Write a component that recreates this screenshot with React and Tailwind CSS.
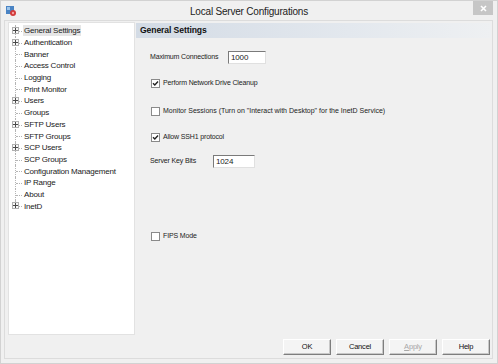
import React from "react";

const treeItems = [
  { label: "General Settings", plus: true, selected: true },
  { label: "Authentication", plus: true },
  { label: "Banner" },
  { label: "Access Control" },
  { label: "Logging" },
  { label: "Print Monitor" },
  { label: "Users", plus: true },
  { label: "Groups" },
  { label: "SFTP Users", plus: true },
  { label: "SFTP Groups" },
  { label: "SCP Users", plus: true },
  { label: "SCP Groups" },
  { label: "Configuration Management" },
  { label: "IP Range" },
  { label: "About" },
  { label: "InetD", plus: true, last: true },
];

function TreeRow({ item }) {
  return (
    <div className="relative flex items-center h-[11.7px]">
      <div
        className={
          "absolute left-[5px] w-px border-l border-dotted border-[#b4b4b4] " +
          (item.last ? "top-0 h-[6px]" : "top-0 h-full")
        }
      />
      <div className="absolute left-[6px] top-[6px] w-[6px] border-t border-dotted border-[#b4b4b4]" />
      {item.plus && (
        <div className="absolute left-[2px] top-[2px] w-[7px] h-[7px] border border-[#b0b0b0] bg-[#f8f8f8] flex items-center justify-center">
          <div className="relative w-[5px] h-[5px]">
            <div className="absolute left-0 top-[2px] w-[5px] h-px bg-[#4a4a4a]" />
            <div className="absolute left-[2px] top-0 w-px h-[5px] bg-[#4a4a4a]" />
          </div>
        </div>
      )}
      <div
        className={
          "ml-[13px] px-[1px] leading-[11px] " +
          (item.selected ? "bg-[#e6e6e6]" : "")
        }
      >
        {item.label}
      </div>
    </div>
  );
}

function Checkbox({ checked }) {
  return (
    <div className="w-[9px] h-[9px] border border-[#8a8a8a] bg-white flex items-center justify-center shrink-0">
      {checked && (
        <svg width="7" height="7" viewBox="0 0 7 7">
          <path d="M1 3.2 L2.8 5 L6 1.5" stroke="#222" strokeWidth="1.4" fill="none" />
        </svg>
      )}
    </div>
  );
}

function Btn({ children, disabled }) {
  return (
    <div
      className={
        "w-[48px] h-[16px] flex items-center justify-center bg-[#f4f4f4] border-t border-l border-t-white border-l-white border-r border-b border-r-[#7e7e7e] border-b-[#7e7e7e] shadow-[inset_-1px_-1px_0_#c8c8c8] " +
        (disabled ? "text-[#a8a8a8]" : "text-[#111]")
      }
    >
      {children}
    </div>
  );
}

export default function App() {
  return (
    <div
      className="w-[498px] h-[364px] bg-[#f0f0f0] border border-[#d2d2d2] flex flex-col overflow-hidden text-[#111]"
      style={{ fontFamily: '"Liberation Sans", Arial, sans-serif' }}
    >
      {/* Title bar */}
      <div className="h-[19px] flex items-center relative">
        <div className="absolute left-[5px] top-[5px] w-[10px] h-[10px]">
          <svg width="10" height="10" viewBox="0 0 10 10">
            <rect x="0" y="0" width="8" height="8" fill="#4a84c4" />
            <rect x="1" y="1" width="3" height="3" fill="#9cc4ea" />
            <circle cx="7" cy="7" r="3" fill="#d23a3a" />
            <circle cx="7" cy="7" r="1.2" fill="#f4a0a0" />
          </svg>
        </div>
        <div className="flex-1 text-center text-[10px] tracking-[-0.2px] text-[#222] pt-[1px]">
          Local Server Configurations
        </div>
        <div className="absolute right-[4px] top-0 w-[20px] h-[14px] bg-[#c6c6c6] flex items-center justify-center">
          <svg width="7" height="7" viewBox="0 0 7 7">
            <path d="M1 1 L6 6 M6 1 L1 6" stroke="#fff" strokeWidth="1.6" />
          </svg>
        </div>
      </div>

      {/* Client frame */}
      <div className="ml-[3px] mr-[4px] h-[339px] border border-[#dcdcdc] flex pl-[3px] pt-[1px] pr-[1px]">
        {/* Tree */}
        <div className="w-[127px] h-[313px] bg-white border border-[#e2e2e2] pt-[2px] pl-[1px] text-[8px] tracking-[-0.2px] text-[#1a1a1a]">
          {treeItems.map((it) => (
            <TreeRow key={it.label} item={it} />
          ))}
        </div>

        {/* Right panel */}
        <div className="flex-1 ml-[1px] flex flex-col">
          <div className="mt-[1px] h-[15px] flex items-center pl-[4px] font-bold text-[8.6px] tracking-[-0.1px] text-[#111] bg-[linear-gradient(to_right,#d3dbe5,#e3e8ee_60%,#eef0f2)]">
            General Settings
          </div>

          <div className="pl-[14px] flex flex-col text-[7px] tracking-[-0.15px] text-[#222]">
            <div className="mt-[13px] h-[13px] flex items-center">
              <div className="w-[78px]">Maximum Connections</div>
              <div className="w-[38px] h-[13px] bg-white border border-[#7a7a7a] border-r-[#e0e0e0] border-b-[#e0e0e0] text-[8px] pl-[2px] leading-[11px]">
                1000
              </div>
            </div>
            <div className="mt-[14px] h-[10px] flex items-center">
              <div className="ml-[1px]"><Checkbox checked /></div>
              <div className="ml-[3px]">Perform Network Drive Cleanup</div>
            </div>
            <div className="mt-[18px] h-[10px] flex items-center">
              <div className="ml-[1px]"><Checkbox /></div>
              <div className="ml-[3px] tracking-[0px]">
                Monitor Sessions (Turn on "Interact with Desktop" for the InetD Service)
              </div>
            </div>
            <div className="mt-[16px] h-[10px] flex items-center">
              <div className="ml-[1px]"><Checkbox checked /></div>
              <div className="ml-[3px]">Allow SSH1 protocol</div>
            </div>
            <div className="mt-[13px] h-[13px] flex items-center">
              <div className="w-[63px]">Server Key Bits</div>
              <div className="w-[42px] h-[13px] bg-white border border-[#7a7a7a] border-r-[#e0e0e0] border-b-[#e0e0e0] text-[8px] pl-[2px] leading-[11px]">
                1024
              </div>
            </div>
            <div className="mt-[63px] h-[10px] flex items-center">
              <div className="ml-[1px]"><Checkbox /></div>
              <div className="ml-[3px]">FIPS Mode</div>
            </div>
          </div>

          <div className="mt-auto mb-[3px] flex justify-end gap-[5px] pr-[1px] text-[7.5px] tracking-[-0.2px]">
            <Btn>OK</Btn>
            <Btn>Cancel</Btn>
            <Btn disabled>
              <span><span className="underline">A</span>pply</span>
            </Btn>
            <Btn>Help</Btn>
          </div>
        </div>
      </div>
    </div>
  );
}
